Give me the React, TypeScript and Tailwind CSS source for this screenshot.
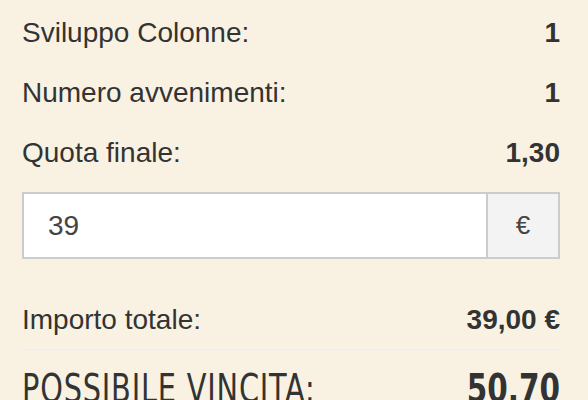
const rows = [
  { label: 'Sviluppo Colonne:', value: '1' },
  { label: 'Numero avvenimenti:', value: '1' },
  { label: 'Quota finale:', value: '1,30' },
];

export default function App() {
  return (
    <div
      className="h-[400px] w-[588px] overflow-hidden bg-[#f9f2e3] pl-[22px] pr-[28px] pt-[3px] text-[#333]"
      style={{ fontFamily: '"Liberation Sans", Arial, sans-serif' }}
    >
      {rows.map((row) => (
        <div key={row.label} className="flex h-[60px] items-center justify-between text-[28px]">
          <span>{row.label}</span>
          <span className="font-bold">{row.value}</span>
        </div>
      ))}

      <div className="mt-[9px] flex h-[67px] border-2 border-[#cccccc]">
        <input
          defaultValue="39"
          className="min-w-0 flex-1 bg-white px-6 text-[28px] text-[#444] outline-none"
        />
        <div className="flex w-[72px] items-center justify-center border-l-2 border-[#cccccc] bg-[#f3f3f3] text-[26px] text-[#444]">
          €
        </div>
      </div>

      <div className="mt-[32px] flex h-[60px] items-center justify-between border-b-2 border-[#f3efe9] text-[28px]">
        <span>Importo totale:</span>
        <span className="font-bold">39,00 €</span>
      </div>

      <div
        className="mt-[18px] flex items-start justify-between whitespace-nowrap text-[39px] uppercase leading-none"
        style={{ fontFamily: '"DejaVu Sans Condensed", sans-serif' }}
      >
        <span className="inline-block origin-left scale-x-[0.82] tracking-[1px]">Possibile vincita:</span>
        <span className="inline-block origin-right scale-x-[0.84] font-bold">50,70</span>
      </div>
    </div>
  );
}
